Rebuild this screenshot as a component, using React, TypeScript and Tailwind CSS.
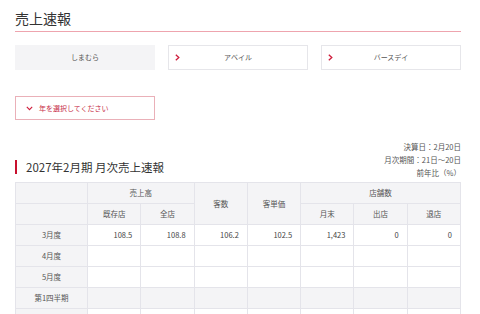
const font = { fontFamily: '"Noto Sans CJK JP", "Noto Sans", sans-serif' };

function Chevron({ down = false }: { down?: boolean }) {
  return down ? (
    <svg width="7" height="5" viewBox="0 0 7 5" className="shrink-0">
      <path d="M0.8 0.8 L3.5 3.6 L6.2 0.8" fill="none" stroke="#cf1d3c" strokeWidth="1.1" />
    </svg>
  ) : (
    <svg width="5" height="7" viewBox="0 0 5 7" className="shrink-0">
      <path d="M0.8 0.8 L3.8 3.5 L0.8 6.2" fill="none" stroke="#cf1d3c" strokeWidth="1.3" />
    </svg>
  );
}

const rows = [
  { label: "3月度", vals: ["108.5", "108.8", "106.2", "102.5", "1,423", "0", "0"], gray: false },
  { label: "4月度", vals: ["", "", "", "", "", "", ""], gray: false },
  { label: "5月度", vals: ["", "", "", "", "", "", ""], gray: false },
  { label: "第1四半期", vals: ["", "", "", "", "", "", ""], gray: true },
  { label: "", vals: ["", "", "", "", "", "", ""], gray: false },
];

export default function App() {
  const th = "border border-[#e4e4ea] bg-[#f4f4f6] font-normal text-center text-[7.5px] text-[#555]";
  return (
    <div className="w-[480px] h-[314px] overflow-hidden bg-white text-[#333]" style={font}>
      <div className="ml-[15px] w-[446px]">
        <div className="pt-[8px] h-[32px] text-[14px] leading-[20px] text-[#333] border-b border-b-[#eea4ae]">売上速報</div>

        <div className="mt-[13px] flex gap-[13px]">
          <div className="w-[140px] h-[25px] bg-[#f4f4f6] flex items-center justify-center text-[7px] text-[#555]">しまむら</div>
          {["アベイル", "バースデイ"].map((t) => (
            <div key={t} className="relative w-[140px] h-[25px] border border-[#e6e6ea] flex items-center justify-center text-[7px] text-[#555]">
              <span className="absolute left-[6px] top-[8px]"><Chevron /></span>
              {t}
            </div>
          ))}
        </div>

        <div className="mt-[26px] w-[140px] h-[24px] border border-[#eab0b8] flex items-center gap-[6px] pl-[10px] text-[7px] text-[#c8304a]">
          <Chevron down />
          年を選択してください
        </div>

        <div className="mt-[20px] relative h-[42px]">
          <div className="absolute right-0 top-0 text-right text-[7.5px] leading-[13px] text-[#555]">
            <div>決算日：2月20日</div>
            <div>月次期間：21日〜20日</div>
            <div>前年比（%）</div>
          </div>
          <div className="absolute left-0 top-[20px] flex items-center">
            <div className="w-[2px] h-[14px] bg-[#c8102e]" />
            <div className="ml-[9px] text-[11.5px] leading-[14px] text-[#333]">2027年2月期 月次売上速報</div>
          </div>
        </div>

        <table className="mt-0 w-[446px] table-fixed border-collapse">
          <colgroup>
            <col className="w-[72px]" />
            <col /><col /><col /><col /><col /><col /><col />
          </colgroup>
          <thead>
            <tr className="h-[21px]">
              <th className={th}></th>
              <th className={th} colSpan={2}>売上高</th>
              <th className={th} rowSpan={2}>客数</th>
              <th className={th} rowSpan={2}>客単価</th>
              <th className={th} colSpan={3}>店舗数</th>
            </tr>
            <tr className="h-[21px]">
              <th className={th}></th>
              <th className={th}>既存店</th>
              <th className={th}>全店</th>
              <th className={th}>月末</th>
              <th className={th}>出店</th>
              <th className={th}>退店</th>
            </tr>
          </thead>
          <tbody>
            {rows.map((r, i) => (
              <tr key={i} className="h-[21px]">
                <td className={th}>{r.label}</td>
                {r.vals.map((v, j) => (
                  <td
                    key={j}
                    className={`border border-[#e4e4ea] text-right pr-[8px] text-[7.5px] text-[#444] ${r.gray ? "bg-[#f4f4f6]" : "bg-white"}`}
                  >
                    {v}
                  </td>
                ))}
              </tr>
            ))}
          </tbody>
        </table>
      </div>
    </div>
  );
}
